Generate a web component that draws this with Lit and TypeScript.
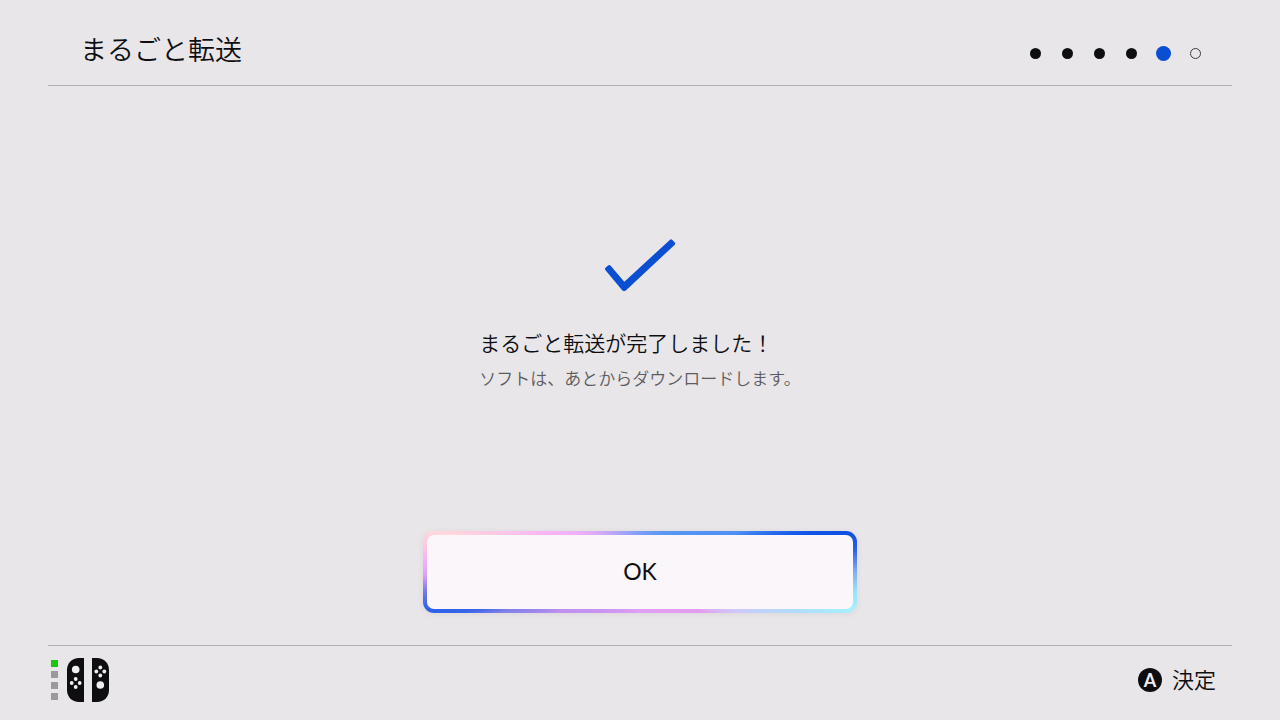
import { LitElement, html, css, svg } from "lit";
import { customElement, property, state } from "lit/decorators.js";
import { classMap } from "lit/directives/class-map.js";

@customElement("step-dots")
class StepDots extends LitElement {
  @property({ type: Number }) total = 6;
  @property({ type: Number }) current = 5;

  static styles = css`
    :host { display: block; }
    .dots { display: flex; margin: 0; padding: 0; list-style: none; }
    .step { display: grid; place-items: center; width: 32px; height: 16px; }
    .dot { box-sizing: border-box; width: 11px; height: 11px; border-radius: 50%; }
    .done { background: #0e0e10; }
    .now { width: 15px; height: 15px; background: #0a4ed2; }
    .todo { border: 1px solid #3c3c40; }
  `;

  render() {
    return html`<ol class="dots">
      ${Array.from({ length: this.total }, (_, i) => {
        const n = i + 1;
        return html`<li class="step">
          <span class=${classMap({
            dot: true,
            done: n < this.current,
            now: n === this.current,
            todo: n > this.current,
          })}></span>
        </li>`;
      })}
    </ol>`;
  }
}

@customElement("controller-status")
class ControllerStatus extends LitElement {
  @property({ type: Number }) player = 1;

  static styles = css`
    :host { display: flex; align-items: center; gap: 9px; }
    .leds { display: grid; gap: 4px; }
    .led { width: 7px; height: 7px; background: #9a999c; }
    .lit { background: #18c80e; }
    .pads { display: block; width: 42px; height: 44px; }
  `;

  render() {
    const dots = (cx: number, cy: number) => svg`
      <circle cx=${cx} cy=${cy - 4} r="1.9"></circle>
      <circle cx=${cx} cy=${cy + 4} r="1.9"></circle>
      <circle cx=${cx - 4} cy=${cy} r="1.9"></circle>
      <circle cx=${cx + 4} cy=${cy} r="1.9"></circle>`;
    return html`
      <div class="leds">
        ${[1, 2, 3, 4].map(
          (n) => html`<span class=${classMap({ led: true, lit: n === this.player })}></span>`
        )}
      </div>
      <svg class="pads" viewBox="0 0 42 44" aria-hidden="true">
        <g fill="#0e0e10">
          <path d="M17 0V44H12C5 44 0 39 0 32V12C0 5 5 0 12 0Z"></path>
          <path d="M25 0V44H30C37 44 42 39 42 32V12C42 5 37 0 30 0Z"></path>
        </g>
        <g fill="#f0eef1">
          <circle cx="8.7" cy="11.5" r="3.8"></circle>
          ${dots(8.7, 25)}
          ${dots(33.3, 13.5)}
          <circle cx="33.3" cy="27" r="3.8"></circle>
        </g>
      </svg>
    `;
  }
}

@customElement("app-root")
class AppRoot extends LitElement {
  @state() private step = 5;

  static styles = css`
    :host {
      display: flex;
      flex-direction: column;
      box-sizing: border-box;
      min-height: 100vh;
      padding: 0 48px;
      background: #e8e6e9;
      color: #0e0e10;
      font-family: "Noto Sans CJK JP", sans-serif;
    }
    .header {
      display: flex;
      align-items: center;
      justify-content: space-between;
      box-sizing: border-box;
      height: 86px;
      padding: 12px 21px 0 32px;
      border-bottom: 1px solid #b0aeb1;
    }
    .title { margin: 0; font-size: 27px; line-height: 40px; font-weight: 350; }
    .steps { margin-top: 10px; }
    .content {
      flex: 1;
      display: flex;
      flex-direction: column;
      align-items: center;
      justify-content: space-between;
      padding: 152px 0 32px;
    }
    .result { display: flex; flex-direction: column; align-items: center; }
    .check { display: block; width: 72px; height: 56px; }
    .message { margin: 32px 0 0; font-size: 21px; line-height: 32px; font-weight: 350; }
    .note { margin: 7px 0 0; font-size: 17px; line-height: 26px; font-weight: 350; color: #5c5b5f; }
    .ok {
      box-sizing: border-box;
      width: 434px;
      max-width: 100%;
      height: 82px;
      padding: 0 0 2px;
      border: 4px solid transparent;
      border-radius: 11px;
      background:
        linear-gradient(#faf6fa, #faf6fa) padding-box,
        conic-gradient(
          #7c9ff8 0deg, #5b98f2 30deg, #5090f5 68deg, #0f55e8 77deg,
          #0f50e0 80deg, #2a60e8 84deg, #7fb0f0 90deg, #98e0fb 95deg,
          #a4f2ff 100deg, #b0dcfa 104deg, #d0c8f8 112deg, #e49cf0 123deg,
          #e0a0f5 180deg, #c090f0 244deg, #8080e8 254deg, #3a66e8 257deg,
          #2a60e8 260deg, #7a78ea 265deg, #d8a0f5 269deg, #f4b0f8 273deg,
          #ffc8e0 277deg, #ffd8dc 281deg, #ffc8e4 285deg, #f8b8f4 291deg,
          #f0b0f8 301deg, #b0a4f6 330deg, #7c9ff8 360deg
        ) border-box;
      box-shadow: 0 1px 6px rgb(60 50 80 / 8%);
      color: inherit;
      font: 400 23px/32px Lato, "Noto Sans CJK JP", sans-serif;
      cursor: pointer;
    }
    .ok:focus-visible { outline: none; }
    .footer {
      display: flex;
      align-items: center;
      justify-content: space-between;
      box-sizing: border-box;
      height: 75px;
      padding: 0 16px 6px 3px;
      border-top: 1px solid #b0aeb1;
    }
    .hint {
      display: flex;
      align-items: center;
      gap: 10px;
      padding: 0;
      border: 0;
      background: none;
      color: inherit;
      font: 350 22px/32px "Noto Sans CJK JP", sans-serif;
      cursor: pointer;
    }
    .hint-label { padding-bottom: 4px; }
    .key {
      display: grid;
      place-items: center;
      width: 24px;
      height: 24px;
      border-radius: 50%;
      background: #0e0e10;
      color: #f0eef1;
      font: 700 18px/24px Lato, sans-serif;
    }
  `;

  private confirm() {
    this.step = 6;
  }

  render() {
    return html`
      <header class="header">
        <h1 class="title">まるごと転送</h1>
        <step-dots class="steps" total="6" .current=${this.step}></step-dots>
      </header>
      <main class="content">
        <section class="result">
          <svg class="check" viewBox="0 0 72 56" aria-hidden="true">
            <path d="M2.9 31 5.3 29 20.2 46.4 67 3.2 69.3 5.6 20.6 51.2 19.6 51.2Z"
              fill="#0a4ed2" stroke="#0a4ed2" stroke-width="3.6" stroke-linejoin="round"></path>
          </svg>
          <div>
            <p class="message">まるごと転送が完了しました！</p>
            <p class="note">ソフトは、あとからダウンロードします。</p>
          </div>
        </section>
        <button class="ok" type="button" @click=${this.confirm}>OK</button>
      </main>
      <footer class="footer">
        <controller-status player="1"></controller-status>
        <button class="hint" type="button" @click=${this.confirm}>
          <span class="key">A</span><span class="hint-label">決定</span>
        </button>
      </footer>
    `;
  }
}
